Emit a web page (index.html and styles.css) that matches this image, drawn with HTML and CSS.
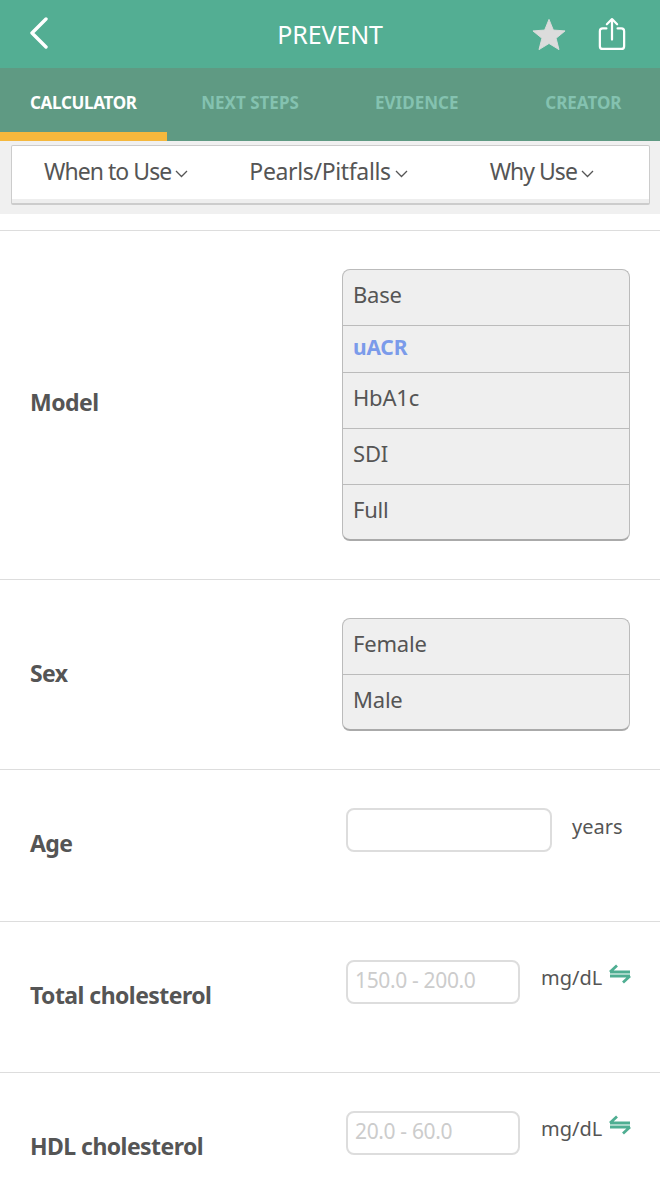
FILE: index.html
```html
<!DOCTYPE html>
<html lang="en">
<head>
    <meta charset="UTF-8">
    <meta name="viewport" content="width=device-width, initial-scale=1.0">
    <title>PREVENT</title>
    <link rel="stylesheet" href="styles.css">
</head>
<body>
    <header class="topbar">
        <svg class="back-icon" width="20" height="32" viewBox="0 0 20 32"><path d="M17 2 L3 16 L17 30" fill="none" stroke="#fff" stroke-width="3.4" stroke-linecap="round" stroke-linejoin="round"/></svg>
        <div class="title">PREVENT</div>
        <svg class="star-icon" width="34" height="33" viewBox="0 0 36 34"><path d="M18 1 L22.6 12.3 L35 13.2 L25.5 21 L28.6 33 L18 26.5 L7.4 33 L10.5 21 L1 13.2 L13.4 12.3 Z" fill="#dcdcdc" stroke="#dcdcdc" stroke-linejoin="round"/></svg>
        <svg class="share-icon" width="28" height="34" viewBox="0 0 30 36"><path d="M9 12 H5 Q2 12 2 15 V31 Q2 34 5 34 H25 Q28 34 28 31 V15 Q28 12 25 12 H21 M15 24 V2 M9.5 7.5 L15 2 L20.5 7.5" fill="none" stroke="#fff" stroke-width="2.4" stroke-linecap="round" stroke-linejoin="round"/></svg>
    </header>

    <nav class="tabs">
        <div class="tab active">CALCULATOR</div>
        <div class="tab">NEXT STEPS</div>
        <div class="tab">EVIDENCE</div>
        <div class="tab">CREATOR</div>
    </nav>

    <div class="info-wrap">
        <div class="info-box">
            <div class="info-link link-when">When to Use<svg class="chev" width="13" height="8" viewBox="0 0 13 8"><path d="M1 1 L6.5 6.5 L12 1" fill="none" stroke="#555" stroke-width="1.3"/></svg></div>
            <div class="info-link link-pearls">Pearls/Pitfalls<svg class="chev" width="13" height="8" viewBox="0 0 13 8"><path d="M1 1 L6.5 6.5 L12 1" fill="none" stroke="#555" stroke-width="1.3"/></svg></div>
            <div class="info-link link-why">Why Use<svg class="chev" width="13" height="8" viewBox="0 0 13 8"><path d="M1 1 L6.5 6.5 L12 1" fill="none" stroke="#555" stroke-width="1.3"/></svg></div>
        </div>
    </div>

    <main class="form">
        <section class="row row-model">
            <div class="label">Model</div>
            <div class="options">
                <div class="option">Base</div>
                <div class="option short selected">uACR</div>
                <div class="option">HbA1c</div>
                <div class="option">SDI</div>
                <div class="option">Full</div>
            </div>
        </section>

        <section class="row row-sex">
            <div class="label">Sex</div>
            <div class="options">
                <div class="option">Female</div>
                <div class="option">Male</div>
            </div>
        </section>

        <section class="row row-input row-age">
            <div class="label">Age</div>
            <div class="field">
                <div class="input wide"></div>
                <div class="unit unit-years">years</div>
            </div>
        </section>

        <section class="row row-input">
            <div class="label">Total cholesterol</div>
            <div class="field">
                <div class="input">150.0 - 200.0</div>
                <div class="unit">mg/dL</div>
                <svg class="swap-icon" width="22" height="20" viewBox="0 0 22 20"><path d="M1 8 H21 M1 8 L8 1.5 M21 12 H1 M21 12 L14 18.5" fill="none" stroke="#4fae92" stroke-width="2.8"/></svg>
            </div>
        </section>

        <section class="row row-input">
            <div class="label">HDL cholesterol</div>
            <div class="field">
                <div class="input">20.0 - 60.0</div>
                <div class="unit">mg/dL</div>
                <svg class="swap-icon" width="22" height="20" viewBox="0 0 22 20"><path d="M1 8 H21 M1 8 L8 1.5 M21 12 H1 M21 12 L14 18.5" fill="none" stroke="#4fae92" stroke-width="2.8"/></svg>
            </div>
        </section>
    </main>
</body>
</html>
```

FILE: styles.css
```css
html, body {
    margin: 0;
    padding: 0;
}
body {
    width: 660px;
    height: 1199px;
    overflow: hidden;
    background: #fff;
    font-family: "Noto Sans", "Open Sans", sans-serif;
    color: #555;
}

.topbar {
    height: 68px;
    background: #53ae93;
    display: flex;
    align-items: center;
    position: relative;
}
.back-icon {
    margin: 0 0 2px 29px;
}
.title {
    position: absolute;
    left: 0;
    right: 0;
    top: 16px;
    text-align: center;
    color: #fff;
    font-size: 25px;
    line-height: 36px;
    letter-spacing: -0.1px;
}
.star-icon {
    margin: 1px 0 0 483px;
}
.share-icon {
    margin: 0 0 0 32px;
}

.tabs {
    height: 73px;
    background: #5f9a83;
    display: flex;
    overflow: hidden;
}
.tab {
    flex: 0 0 166.7px;
    box-sizing: border-box;
    text-align: center;
    padding-top: 23px;
    font-size: 17px;
    line-height: 24px;
    font-weight: 700;
    color: #84c2b0;
    letter-spacing: 0;
}
.tab.active {
    color: #fff;
    letter-spacing: -0.3px;
    border-bottom: 9px solid #f5b83d;
}

.info-wrap {
    height: 73px;
    background: #f0f0f0;
    padding: 4px 10px 0 11px;
    box-sizing: border-box;
}
.info-box {
    height: 60px;
    box-sizing: border-box;
    background: #fff;
    border: 1px solid #ccc;
    border-bottom: 2px solid #ccc;
    border-radius: 2px;
    box-shadow: inset 0 -4px 0 #eee;
    display: flex;
    padding-top: 8px;
}
.info-link {
    font-size: 23px;
    line-height: 34px;
    white-space: nowrap;
}
.link-when {
    margin-left: 32px;
    letter-spacing: -0.95px;
}
.link-pearls {
    margin-left: 61px;
    letter-spacing: -0.35px;
}
.link-why {
    margin-left: 82px;
    letter-spacing: -1px;
}
.chev {
    margin-left: 4px;
    vertical-align: 2px;
}

.form {
    margin-top: 16px;
    border-top: 1px solid #ddd;
}
.row {
    position: relative;
    display: flex;
    justify-content: space-between;
    align-items: flex-start;
    border-bottom: 1px solid #ddd;
    box-sizing: border-box;
}
.row-model {
    height: 349px;
    padding: 38px 30px 0 30px;
}
.row-sex {
    height: 190px;
    padding: 38px 30px 0 30px;
}
.row-input {
    height: 151px;
    padding: 38px 0 0 30px;
}
.row-age {
    height: 152px;
}
.label {
    font-size: 23px;
    line-height: 32px;
    font-weight: 700;
    letter-spacing: -0.55px;
}
.row-model .label {
    margin-top: 117px;
}
.row-sex .label {
    margin-top: 39px;
}
.row-input .label {
    margin-top: 19px;
}

.options {
    width: 288px;
    box-sizing: border-box;
    background: #efefef;
    border: 1px solid #bbb;
    border-bottom: 2px solid #aaa;
    border-radius: 8px;
}
.option {
    height: 56px;
    box-sizing: border-box;
    padding: 0 10px;
    font-size: 22px;
    line-height: 49px;
    letter-spacing: -0.2px;
    border-bottom: 1px solid #bbb;
}
.option:last-child {
    height: 54px;
    border-bottom: 0;
}
.option.short {
    height: 47px;
    line-height: 42px;
}
.option.selected {
    color: #7b9bea;
    font-weight: 700;
    font-size: 21px;
}

.field {
    width: 314px;
    display: flex;
    align-items: flex-start;
}
.input {
    width: 174px;
    height: 44px;
    box-sizing: border-box;
    border: 2px solid #ddd;
    border-radius: 8px;
    padding-left: 7px;
    font-size: 21px;
    line-height: 37px;
    letter-spacing: -0.35px;
    color: #ccc;
    background: #fff;
}
.input.wide {
    width: 206px;
}
.unit {
    margin-left: 21px;
    font-size: 20px;
    line-height: 36px;
}
.unit.unit-years {
    margin: 1px 0 0 20px;
}
.swap-icon {
    margin: 4px 0 0 7px;
}
```
